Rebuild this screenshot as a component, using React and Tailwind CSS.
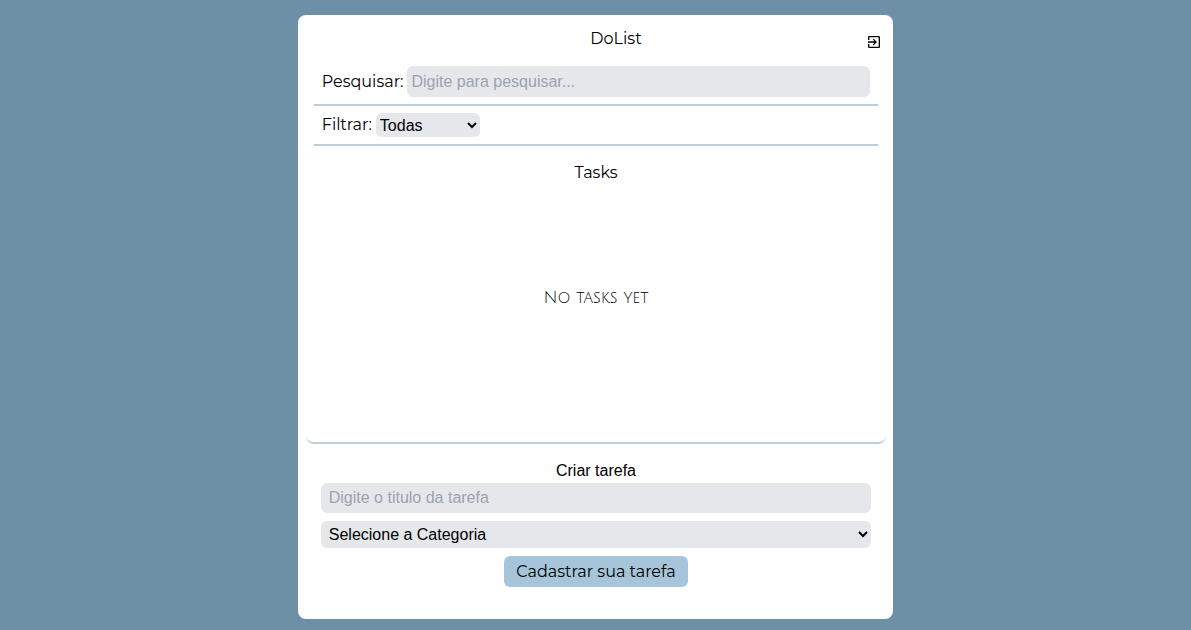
import { MdExitToApp } from "react-icons/md";

const field =
  "rounded-md bg-[#e5e7eb] text-base text-black placeholder:text-[#9ca3af] outline-none";

export default function App() {
  return (
    <div className="flex min-h-screen justify-center bg-[#6d90a7] pt-[15px] pb-[11px] font-['Montserrat',sans-serif] text-base text-black">
      <main className="flex w-1/2 flex-col rounded-lg bg-white pt-3 pr-[7px] pl-2">
        <header className="flex h-[31px] items-start justify-between pr-1 pl-10">
          <h1 className="flex-1 pl-5 text-center">DoList</h1>
          <button type="button" aria-label="Sair" className="pt-[7px]">
            <MdExitToApp className="size-4" />
          </button>
        </header>

        <section className="flex flex-1 flex-col rounded-lg border-b-2 border-[#bccfdb] px-2 pb-2">
          <div className="flex items-center gap-1 border-b-2 border-[#bccfdb] px-2 pt-2 pb-[7px]">
            <label htmlFor="search">Pesquisar:</label>
            <input
              id="search"
              type="text"
              placeholder="Digite para pesquisar..."
              className={`${field} h-[31px] min-w-0 flex-1 px-1 font-['Liberation_Sans',Arial,sans-serif]`}
            />
          </div>
          <div className="flex items-center gap-1 border-b-2 border-[#bccfdb] px-2 py-[7px]">
            <label htmlFor="filter">Filtrar:</label>
            <select
              id="filter"
              className={`${field} h-6 w-[104px] font-['Liberation_Sans',Arial,sans-serif]`}
            >
              <option>Todas</option>
              <option>Completas</option>
              <option>Incompletas</option>
            </select>
          </div>
          <h2 className="pt-[15px] text-center">Tasks</h2>
          <div className="flex flex-1 items-center justify-center pb-6">
            <p className="font-['Julius_Sans_One','Lato',sans-serif] text-base">
              No tasks yet
            </p>
          </div>
        </section>

        <form
          className="flex flex-col items-center px-[15px] pt-[15px] pb-8 font-['Liberation_Sans',Arial,sans-serif]"
          onSubmit={(e) => e.preventDefault()}
        >
          <h2>Criar tarefa</h2>
          <input
            type="text"
            aria-label="Titulo da tarefa"
            placeholder="Digite o titulo da tarefa"
            className={`${field} h-[30px] w-full px-2`}
          />
          <select aria-label="Categoria" className={`${field} mt-2 h-[27px] w-full pl-1`}>
            <option>Selecione a Categoria</option>
            <option>Trabalho</option>
            <option>Pessoal</option>
            <option>Estudos</option>
          </select>
          <button
            type="submit"
            className="mt-2 h-[31px] rounded-md bg-[#a6c5da] px-3 font-['Montserrat',sans-serif]"
          >
            Cadastrar sua tarefa
          </button>
        </form>
      </main>
    </div>
  );
}
